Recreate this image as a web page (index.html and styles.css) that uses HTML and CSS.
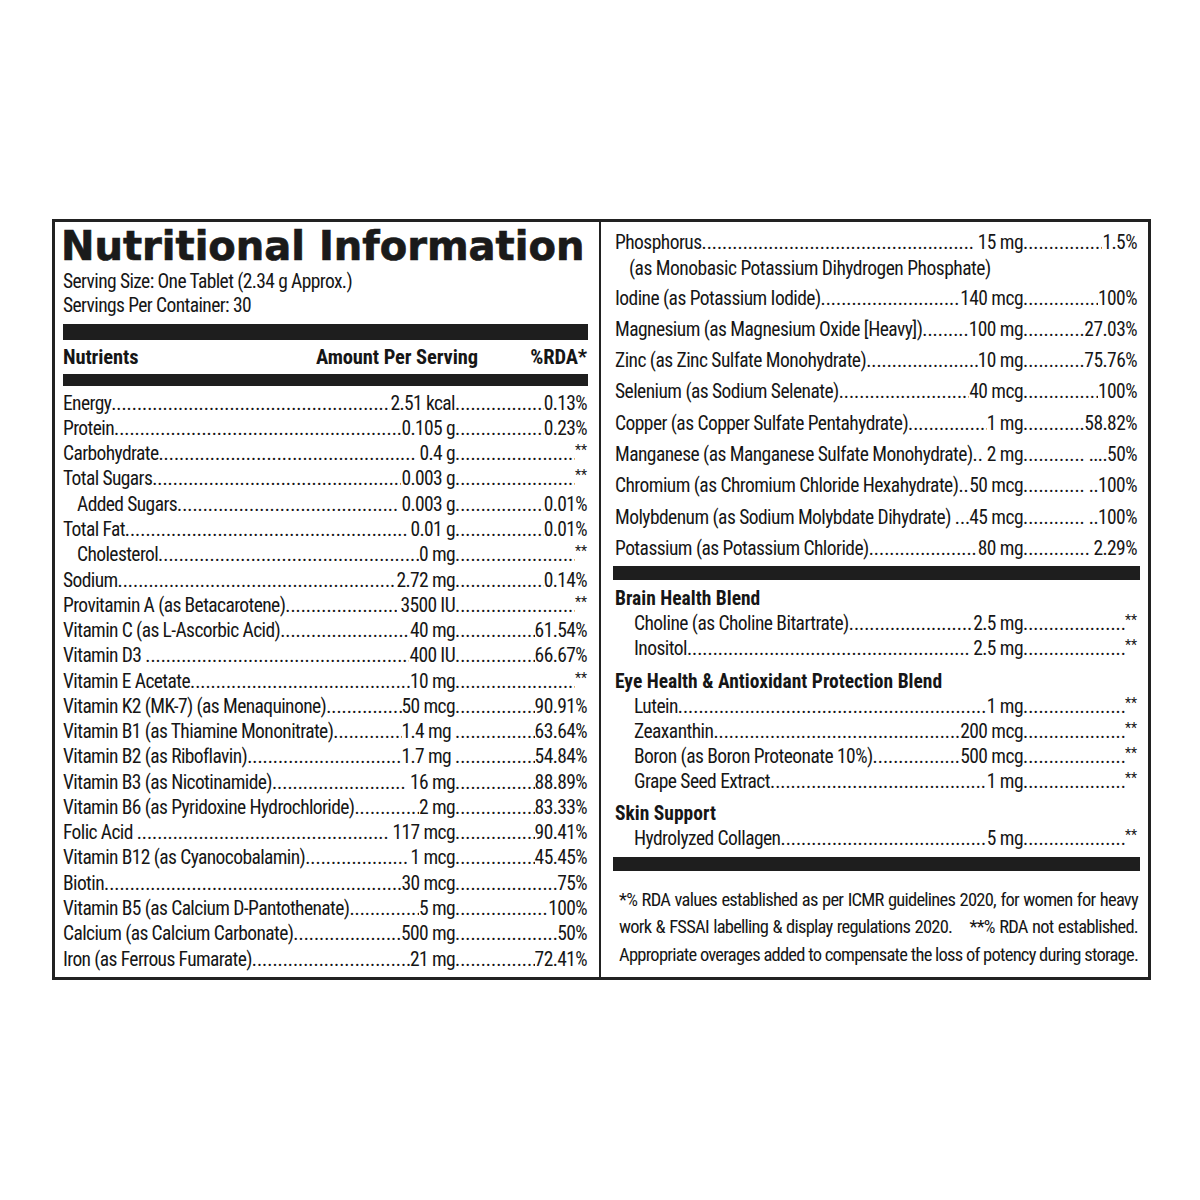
FILE: index.html
```html
<!DOCTYPE html>
<html>
<head>
<meta charset="utf-8">
<link rel="stylesheet" href="styles.css">
</head>
<body>
<div class="label">
  <div class="col col-left">
    <h1 class="title">Nutritional Information</h1>
    <div class="serving first-serving">Serving Size: One Tablet (2.34 g Approx.)</div>
    <div class="serving">Servings Per Container: 30</div>
    <div class="bar bar-top"></div>
    <div class="head">
      <span class="h-n">Nutrients</span>
      <span class="h-a">Amount Per Serving</span>
      <span class="h-r">%RDA*</span>
    </div>
    <div class="bar bar-mid"></div>
    <div class="rows">
      <div class="row"><div class="l"><span class="n">Energy</span><span class="d"></span><span class="a">2.51 kcal</span></div><span class="d"></span><span class="r">0.13%</span></div>
      <div class="row"><div class="l"><span class="n">Protein</span><span class="d"></span><span class="a">0.105 g</span></div><span class="d"></span><span class="r">0.23%</span></div>
      <div class="row"><div class="l"><span class="n">Carbohydrate</span><span class="d"></span><span class="a">&nbsp;0.4 g</span></div><span class="d"></span><span class="r s">**</span></div>
      <div class="row"><div class="l"><span class="n">Total Sugars</span><span class="d"></span><span class="a">0.003 g</span></div><span class="d"></span><span class="r s">**</span></div>
      <div class="row"><div class="l"><span class="n ind">Added Sugars</span><span class="d"></span><span class="a">&nbsp;0.003 g</span></div><span class="d"></span><span class="r">0.01%</span></div>
      <div class="row"><div class="l"><span class="n">Total Fat</span><span class="d"></span><span class="a">&nbsp;0.01 g</span></div><span class="d"></span><span class="r">0.01%</span></div>
      <div class="row"><div class="l"><span class="n ind">Cholesterol</span><span class="d"></span><span class="a">0 mg</span></div><span class="d"></span><span class="r s">**</span></div>
      <div class="row"><div class="l"><span class="n">Sodium</span><span class="d"></span><span class="a">2.72 mg</span></div><span class="d"></span><span class="r">0.14%</span></div>
      <div class="row"><div class="l"><span class="n">Provitamin A (as Betacarotene)</span><span class="d"></span><span class="a">&nbsp;3500 IU</span></div><span class="d"></span><span class="r s">**</span></div>
      <div class="row"><div class="l"><span class="n">Vitamin C (as L-Ascorbic Acid)</span><span class="d"></span><span class="a">40 mg</span></div><span class="d"></span><span class="r">61.54%</span></div>
      <div class="row"><div class="l"><span class="n">Vitamin D3&nbsp;</span><span class="d"></span><span class="a">400 IU</span></div><span class="d"></span><span class="r">66.67%</span></div>
      <div class="row"><div class="l"><span class="n">Vitamin E Acetate</span><span class="d"></span><span class="a">10 mg</span></div><span class="d"></span><span class="r s">**</span></div>
      <div class="row"><div class="l"><span class="n">Vitamin K2 (MK-7) (as Menaquinone)</span><span class="d"></span><span class="a">50 mcg</span></div><span class="d"></span><span class="r">90.91%</span></div>
      <div class="row"><div class="l"><span class="n">Vitamin B1 (as Thiamine Mononitrate)</span><span class="d"></span><span class="a">1.4 mg&nbsp;</span></div><span class="d"></span><span class="r">63.64%</span></div>
      <div class="row"><div class="l"><span class="n">Vitamin B2 (as Riboflavin)</span><span class="d"></span><span class="a">1.7 mg&nbsp;</span></div><span class="d"></span><span class="r">54.84%</span></div>
      <div class="row"><div class="l"><span class="n">Vitamin B3 (as Nicotinamide)</span><span class="d"></span><span class="a">&nbsp;16 mg</span></div><span class="d"></span><span class="r">88.89%</span></div>
      <div class="row"><div class="l"><span class="n">Vitamin B6 (as Pyridoxine Hydrochloride)</span><span class="d"></span><span class="a">2 mg</span></div><span class="d"></span><span class="r">83.33%</span></div>
      <div class="row"><div class="l"><span class="n">Folic Acid&nbsp;</span><span class="d"></span><span class="a">&nbsp;117 mcg</span></div><span class="d"></span><span class="r">90.41%</span></div>
      <div class="row"><div class="l"><span class="n">Vitamin B12 (as Cyanocobalamin)</span><span class="d"></span><span class="a">&nbsp;1 mcg</span></div><span class="d"></span><span class="r">45.45%</span></div>
      <div class="row"><div class="l"><span class="n">Biotin</span><span class="d"></span><span class="a">30 mcg</span></div><span class="d"></span><span class="r">75%</span></div>
      <div class="row"><div class="l"><span class="n">Vitamin B5 (as Calcium D-Pantothenate)</span><span class="d"></span><span class="a">5 mg</span></div><span class="d"></span><span class="r">100%</span></div>
      <div class="row"><div class="l"><span class="n">Calcium (as Calcium Carbonate)</span><span class="d"></span><span class="a">500 mg</span></div><span class="d"></span><span class="r">50%</span></div>
      <div class="row"><div class="l"><span class="n">Iron (as Ferrous Fumarate)</span><span class="d"></span><span class="a">21 mg</span></div><span class="d"></span><span class="r">72.41%</span></div>
    </div>
  </div>
  <div class="col col-right">
    <div class="minerals">
      <div class="row phos"><div class="l"><span class="n">Phosphorus</span><span class="d"></span><span class="a">&nbsp;15 mg</span></div><span class="d"></span><span class="r">1.5%</span></div>
      <div class="sub">(as Monobasic Potassium Dihydrogen Phosphate)</div>
      <div class="row rrow"><div class="l"><span class="n">Iodine (as Potassium Iodide)</span><span class="d"></span><span class="a">140 mcg</span></div><span class="d"></span><span class="r">100%</span></div>
      <div class="row rrow"><div class="l"><span class="n">Magnesium (as Magnesium Oxide [Heavy])</span><span class="d"></span><span class="a">100 mg</span></div><span class="d"></span><span class="r">27.03%</span></div>
      <div class="row rrow"><div class="l"><span class="n">Zinc (as Zinc Sulfate Monohydrate)</span><span class="d"></span><span class="a">10 mg</span></div><span class="d"></span><span class="r">75.76%</span></div>
      <div class="row rrow"><div class="l"><span class="n">Selenium (as Sodium Selenate)</span><span class="d"></span><span class="a">40 mcg</span></div><span class="d"></span><span class="r">100%</span></div>
      <div class="row rrow"><div class="l"><span class="n">Copper (as Copper Sulfate Pentahydrate)</span><span class="d"></span><span class="a">1 mg</span></div><span class="d"></span><span class="r">58.82%</span></div>
      <div class="row rrow"><div class="l"><span class="n">Manganese (as Manganese Sulfate Monohydrate)</span><span class="d"></span><span class="a">&nbsp;2 mg</span></div><span class="d"></span><span class="r">&nbsp;....50%</span></div>
      <div class="row rrow"><div class="l"><span class="n">Chromium (as Chromium Chloride Hexahydrate)</span><span class="d"></span><span class="a">50 mcg</span></div><span class="d"></span><span class="r">&nbsp;..100%</span></div>
      <div class="row rrow"><div class="l"><span class="n">Molybdenum (as Sodium Molybdate Dihydrate)&nbsp;</span><span class="d"></span><span class="a">45 mcg</span></div><span class="d"></span><span class="r">&nbsp;..100%</span></div>
      <div class="row rrow"><div class="l"><span class="n">Potassium (as Potassium Chloride)</span><span class="d"></span><span class="a">80 mg</span></div><span class="d"></span><span class="r">&nbsp;2.29%</span></div>
    </div>
    <div class="bar bar-r1"></div>
    <div class="blends">
      <div class="blend-title">Brain Health Blend</div>
      <div class="row"><div class="l"><span class="n ind2">Choline (as Choline Bitartrate)</span><span class="d"></span><span class="a">2.5 mg</span></div><span class="d"></span><span class="r s">**</span></div>
      <div class="row"><div class="l"><span class="n ind2">Inositol</span><span class="d"></span><span class="a">&nbsp;2.5 mg</span></div><span class="d"></span><span class="r s">**</span></div>
      <div class="blend-title bt2">Eye Health &amp; Antioxidant Protection Blend</div>
      <div class="row"><div class="l"><span class="n ind2">Lutein</span><span class="d"></span><span class="a">1 mg</span></div><span class="d"></span><span class="r s">**</span></div>
      <div class="row"><div class="l"><span class="n ind2">Zeaxanthin</span><span class="d"></span><span class="a">200 mcg</span></div><span class="d"></span><span class="r s">**</span></div>
      <div class="row"><div class="l"><span class="n ind2">Boron (as Boron Proteonate 10%)</span><span class="d"></span><span class="a">500 mcg</span></div><span class="d"></span><span class="r s">**</span></div>
      <div class="row"><div class="l"><span class="n ind2">Grape Seed Extract</span><span class="d"></span><span class="a">1 mg</span></div><span class="d"></span><span class="r s">**</span></div>
      <div class="blend-title bt3">Skin Support</div>
      <div class="row"><div class="l"><span class="n ind2">Hydrolyzed Collagen</span><span class="d"></span><span class="a">5 mg</span></div><span class="d"></span><span class="r s">**</span></div>
    </div>
    <div class="bar bar-r2"></div>
    <div class="foot">
      <div class="fl">*% RDA values established as per ICMR guidelines 2020, for women for heavy</div>
      <div class="fl">work &amp; FSSAI labelling &amp; display regulations 2020. &nbsp; &nbsp;**% RDA not established.</div>
      <div class="fl">Appropriate overages added to compensate the loss of potency during storage.</div>
    </div>
  </div>
</div>
</body>
</html>
```
FILE: styles.css
```css
html, body {
  margin: 0;
  padding: 0;
  background: #fff;
}
body {
  font-family: "Roboto", "Liberation Sans", sans-serif;
  font-stretch: 75%;
  font-weight: 450;
  color: #161616;
  font-size: 19.5px;
}
.label {
  box-sizing: border-box;
  margin: 219px 0 0 52px;
  width: 1099px;
  height: 761px;
  border: 3px solid #222;
  display: flex;
}
.col {
  box-sizing: border-box;
  min-width: 0;
  overflow: hidden;
}
.col-left {
  width: 546px;
  flex: none;
  padding: 4px 11px 0 8px;
  border-right: 2px solid #222;
}
.col-right {
  width: 547px;
  flex: none;
  padding: 7.5px 8px 0 12px;
}
.title {
  margin: 0 0 0 -2px;
  font-family: "DejaVu Sans", sans-serif;
  font-stretch: 100%;
  font-weight: 900;
  font-size: 40px;
  line-height: 40px;
  color: #1a1a1a;
  -webkit-text-stroke: 0.7px #1a1a1a;
  white-space: nowrap;
}
.serving {
  line-height: 24px;
  letter-spacing: -0.6px;
  white-space: nowrap;
}
.first-serving {
  margin-top: 4px;
}
.bar {
  background: #1e1e1e;
}
.bar-top {
  height: 16px;
  margin-top: 6px;
}
.bar-mid {
  height: 12px;
}
.head {
  display: flex;
  font-weight: bold;
  font-size: 20.5px;
  line-height: 34px;
  letter-spacing: -0.1px;
  white-space: nowrap;
}
.h-n { width: 250px; }
.h-a { width: 165px; text-align: right; }
.h-r { flex: 1; text-align: right; padding-right: 1px; }
.rows {
  padding-top: 4.7px;
}
.row {
  display: flex;
  align-items: baseline;
  white-space: nowrap;
  line-height: 25.27px;
  letter-spacing: -0.6px;
}
.row .l {
  display: flex;
  align-items: baseline;
  width: 392px;
  flex: none;
}
.n, .a, .r { flex: none; }
.col-left .row .r { padding-right: 1px; }
.d {
  flex: 1;
  min-width: 0;
  overflow: hidden;
  letter-spacing: 0;
}
.d::after {
  content: "................................................................................................................................................................................................";
}
.ind { padding-left: 14px; }
.ind2 { padding-left: 19px; }
.r.s {
  position: relative;
  top: -5px;
  font-size: 14px;
  line-height: 10px;
  letter-spacing: 0;
}
.minerals, .blends {
  padding: 0 3px 0 2px;
}
.col-right .row {
  letter-spacing: -0.55px;
}
.col-right .row .l {
  width: 408px;
}
.phos {
  line-height: 25px;
}
.sub {
  padding-left: 14px;
  line-height: 28px;
  letter-spacing: -0.5px;
  white-space: nowrap;
}
.rrow {
  line-height: 31.3px;
}
.bar-r1 {
  height: 14px;
  margin-top: 1.8px;
}
.blends {
  padding-top: 6.5px;
}
.blend-title {
  font-weight: bold;
  font-size: 19.5px;
  line-height: 25px;
  letter-spacing: 0;
  white-space: nowrap;
}
.blends .row {
  line-height: 25px;
}
.bt2 {
  margin-top: 8px;
}
.bt3 {
  margin-top: 7px;
}
.bar-r2 {
  height: 14px;
  margin-top: 5.5px;
}
.foot {
  padding: 16px 2px 0 6px;
  font-size: 18.5px;
  letter-spacing: -0.75px;
}
.fl {
  line-height: 27.5px;
  text-align: justify;
  text-align-last: justify;
  white-space: nowrap;
}
```
